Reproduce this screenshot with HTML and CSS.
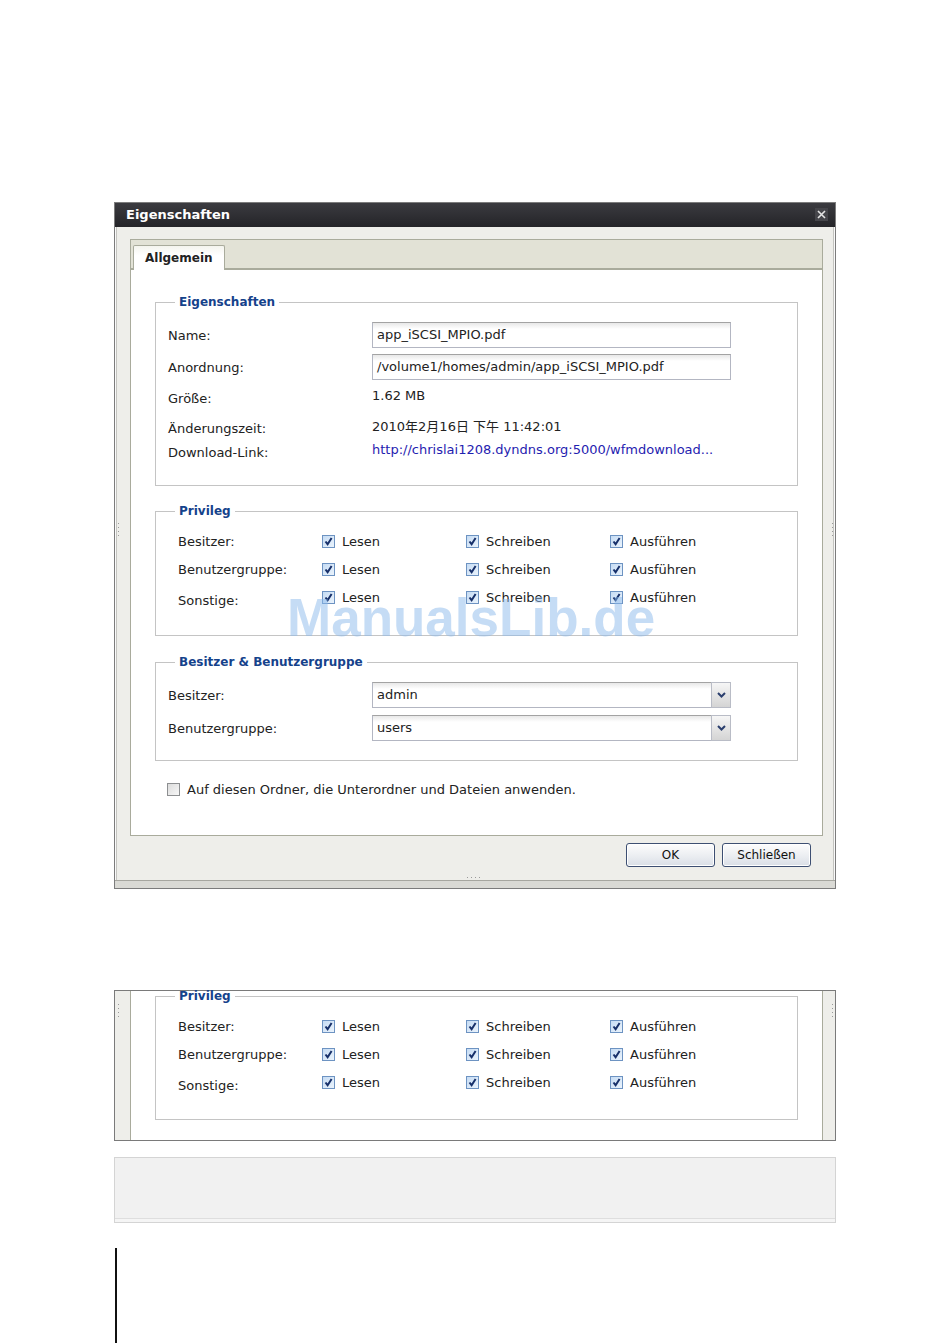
FILE: index.html
```html
<!DOCTYPE html>
<html lang="de">
  <head>
    <meta charset="UTF-8" />
    <meta name="viewport" content="width=device-width, initial-scale=1.0" />
    <title>Eigenschaften</title>
    <link rel="stylesheet" href="styles.css">
  </head>
  <body>
    <div class="page">
      <div class="window">
        <div class="win-head">
          <span class="win-title">Eigenschaften</span>
          <span class="win-close">
            <svg width="11" height="11" viewBox="0 0 11 11"><path d="M2 2 L9 9 M9 2 L2 9" stroke="#e4e4e4" stroke-width="1.6" fill="none"/></svg>
          </span>
        </div>
        <div class="win-body">
          <div class="tabpanel">
            <div class="tabstrip">
              <div class="tab">Allgemein</div>
            </div>
            <div class="tabbody">
              <fieldset class="group g-props">
                <legend>Eigenschaften</legend>
                <div class="props">
                  <div class="lbl">Name:</div>
                  <div class="field">app_iSCSI_MPIO.pdf</div>
                  <div class="lbl">Anordnung:</div>
                  <div class="field">/volume1/homes/admin/app_iSCSI_MPIO.pdf</div>
                  <div class="lbl">Größe:</div>
                  <div class="val">1.62 MB</div>
                  <div class="lbl">Änderungszeit:</div>
                  <div class="val">2010年2月16日 下午 11:42:01</div>
                  <div class="lbl">Download-Link:</div>
                  <div class="val"><a class="link" href="#">http://chrislai1208.dyndns.org:5000/wfmdownload...</a></div>
                </div>
              </fieldset>

              <fieldset class="group g-priv">
                <legend>Privileg</legend>
                <div class="priv">
                  <div class="plbl">Besitzer:</div>
                  <label class="chk"><span class="cb on"><svg width="11" height="11" viewBox="0 0 11 11"><path d="M2.5 5.5 L4.6 8.2 L8.6 2" stroke="#17306a" stroke-width="2" fill="none"/></svg></span>Lesen</label>
                  <label class="chk"><span class="cb on"><svg width="11" height="11" viewBox="0 0 11 11"><path d="M2.5 5.5 L4.6 8.2 L8.6 2" stroke="#17306a" stroke-width="2" fill="none"/></svg></span>Schreiben</label>
                  <label class="chk"><span class="cb on"><svg width="11" height="11" viewBox="0 0 11 11"><path d="M2.5 5.5 L4.6 8.2 L8.6 2" stroke="#17306a" stroke-width="2" fill="none"/></svg></span>Ausführen</label>

                  <div class="plbl">Benutzergruppe:</div>
                  <label class="chk"><span class="cb on"><svg width="11" height="11" viewBox="0 0 11 11"><path d="M2.5 5.5 L4.6 8.2 L8.6 2" stroke="#17306a" stroke-width="2" fill="none"/></svg></span>Lesen</label>
                  <label class="chk"><span class="cb on"><svg width="11" height="11" viewBox="0 0 11 11"><path d="M2.5 5.5 L4.6 8.2 L8.6 2" stroke="#17306a" stroke-width="2" fill="none"/></svg></span>Schreiben</label>
                  <label class="chk"><span class="cb on"><svg width="11" height="11" viewBox="0 0 11 11"><path d="M2.5 5.5 L4.6 8.2 L8.6 2" stroke="#17306a" stroke-width="2" fill="none"/></svg></span>Ausführen</label>

                  <div class="plbl low">Sonstige:</div>
                  <label class="chk"><span class="cb on"><svg width="11" height="11" viewBox="0 0 11 11"><path d="M2.5 5.5 L4.6 8.2 L8.6 2" stroke="#17306a" stroke-width="2" fill="none"/></svg></span>Lesen</label>
                  <label class="chk"><span class="cb on"><svg width="11" height="11" viewBox="0 0 11 11"><path d="M2.5 5.5 L4.6 8.2 L8.6 2" stroke="#17306a" stroke-width="2" fill="none"/></svg></span>Schreiben</label>
                  <label class="chk"><span class="cb on"><svg width="11" height="11" viewBox="0 0 11 11"><path d="M2.5 5.5 L4.6 8.2 L8.6 2" stroke="#17306a" stroke-width="2" fill="none"/></svg></span>Ausführen</label>
                </div>
              </fieldset>

              <fieldset class="group g-owner">
                <legend>Besitzer &amp; Benutzergruppe</legend>
                <div class="owner">
                  <div class="lbl">Besitzer:</div>
                  <div class="field combo">admin<span class="trigger"><svg width="9" height="6" viewBox="0 0 9 6"><path d="M1 1 L4.5 4.5 L8 1" stroke="#2b3f6e" stroke-width="2" fill="none"/></svg></span></div>
                  <div class="lbl">Benutzergruppe:</div>
                  <div class="field combo">users<span class="trigger"><svg width="9" height="6" viewBox="0 0 9 6"><path d="M1 1 L4.5 4.5 L8 1" stroke="#2b3f6e" stroke-width="2" fill="none"/></svg></span></div>
                </div>
              </fieldset>

              <label class="apply"><span class="cb"></span>Auf diesen Ordner, die Unterordner und Dateien anwenden.</label>
            </div>
          </div>
          <div class="buttons">
            <button class="btn">OK</button>
            <button class="btn">Schließen</button>
          </div>
        </div>
        <div class="win-foot"><span class="grip-b"></span></div>
        <span class="grip grip-l"></span>
        <span class="grip grip-r"></span>
      </div>

      <div class="frag">
        <div class="frag-panel">
          <fieldset class="group g-frag">
            <legend>Privileg</legend>
            <div class="priv">
              <div class="plbl">Besitzer:</div>
              <label class="chk"><span class="cb on"><svg width="11" height="11" viewBox="0 0 11 11"><path d="M2.5 5.5 L4.6 8.2 L8.6 2" stroke="#17306a" stroke-width="2" fill="none"/></svg></span>Lesen</label>
              <label class="chk"><span class="cb on"><svg width="11" height="11" viewBox="0 0 11 11"><path d="M2.5 5.5 L4.6 8.2 L8.6 2" stroke="#17306a" stroke-width="2" fill="none"/></svg></span>Schreiben</label>
              <label class="chk"><span class="cb on"><svg width="11" height="11" viewBox="0 0 11 11"><path d="M2.5 5.5 L4.6 8.2 L8.6 2" stroke="#17306a" stroke-width="2" fill="none"/></svg></span>Ausführen</label>

              <div class="plbl">Benutzergruppe:</div>
              <label class="chk"><span class="cb on"><svg width="11" height="11" viewBox="0 0 11 11"><path d="M2.5 5.5 L4.6 8.2 L8.6 2" stroke="#17306a" stroke-width="2" fill="none"/></svg></span>Lesen</label>
              <label class="chk"><span class="cb on"><svg width="11" height="11" viewBox="0 0 11 11"><path d="M2.5 5.5 L4.6 8.2 L8.6 2" stroke="#17306a" stroke-width="2" fill="none"/></svg></span>Schreiben</label>
              <label class="chk"><span class="cb on"><svg width="11" height="11" viewBox="0 0 11 11"><path d="M2.5 5.5 L4.6 8.2 L8.6 2" stroke="#17306a" stroke-width="2" fill="none"/></svg></span>Ausführen</label>

              <div class="plbl low">Sonstige:</div>
              <label class="chk"><span class="cb on"><svg width="11" height="11" viewBox="0 0 11 11"><path d="M2.5 5.5 L4.6 8.2 L8.6 2" stroke="#17306a" stroke-width="2" fill="none"/></svg></span>Lesen</label>
              <label class="chk"><span class="cb on"><svg width="11" height="11" viewBox="0 0 11 11"><path d="M2.5 5.5 L4.6 8.2 L8.6 2" stroke="#17306a" stroke-width="2" fill="none"/></svg></span>Schreiben</label>
              <label class="chk"><span class="cb on"><svg width="11" height="11" viewBox="0 0 11 11"><path d="M2.5 5.5 L4.6 8.2 L8.6 2" stroke="#17306a" stroke-width="2" fill="none"/></svg></span>Ausführen</label>
            </div>
          </fieldset>
        </div>
        <span class="grip grip-l"></span>
        <span class="grip grip-r"></span>
      </div>

      <div class="note"></div>
      <div class="bar"></div>

      <div class="watermark">ManualsLib.de</div>
    </div>
  </body>
</html>
```

FILE: styles.css
```css
body {
  margin: 0;
  background: #fff;
  font-family: "DejaVu Sans", "Noto Sans CJK SC", sans-serif;
  font-size: 13px;
  color: #222;
}
.page {
  position: relative;
  margin-left: 114px;
  padding-top: 202px;
  width: 722px;
}

/* window */
.window {
  position: relative;
  width: 722px;
  box-sizing: border-box;
  border: 1px solid #7c7c7c;
  background: #eeeeea;
  box-shadow: inset 0 0 0 1px #fafafa, inset 0 0 0 2px #c4c4c0;
}
.win-head {
  height: 24px;
  box-sizing: border-box;
  display: flex;
  align-items: center;
  justify-content: space-between;
  padding: 0 7px 2px 11px;
  background: linear-gradient(#3b3b40, #242428);
}
.win-title {
  color: #fff;
  font-weight: bold;
  font-size: 13px;
}
.win-close {
  width: 13px;
  height: 13px;
  display: flex;
  align-items: center;
  justify-content: center;
  background: #45454a;
}
.win-body {
  padding: 12px 12px 0 15px;
}
.tabstrip {
  height: 23px;
  padding: 5px 0 0 2px;
  box-sizing: content-box;
  border: 1px solid #a9ab9c;
  border-bottom-width: 2px;
  background: #e2e2d6;
  display: flex;
  align-items: flex-start;
}
.tab {
  width: 92px;
  height: 25px;
  margin-bottom: -2px;
  border: 1px solid #a9ab9c;
  border-bottom: none;
  border-radius: 2px 2px 0 0;
  background: linear-gradient(#f4f4ee, #fff 40%);
  font-weight: bold;
  font-size: 12px;
  line-height: 24px;
  padding-left: 11px;
  box-sizing: border-box;
  color: #222;
}
.tabbody {
  background: #fff;
  border: 1px solid #a9ab9c;
  border-top: none;
  padding: 24px 0 36px;
}

/* fieldsets */
.group {
  margin: 0 24px;
  padding: 9px 12px 23px;
  border: 1px solid #c4c4c4;
  min-width: 0;
}
.group legend {
  margin-left: 7px;
  padding: 0 4px;
  font-size: 12px;
  font-weight: bold;
  line-height: 16px;
  color: #15428b;
}
.g-priv {
  margin-top: 17px;
  padding: 8px 12px 24px;
}
.g-owner {
  margin-top: 18px;
  padding: 12px 12px 19px;
}
.props {
  display: grid;
  grid-template-columns: 204px 359px;
  grid-template-rows: 32px 32px 31px 28px 20px;
  align-items: center;
}
.owner {
  display: grid;
  grid-template-columns: 204px 359px;
  grid-auto-rows: 26px;
  row-gap: 7px;
  align-items: center;
}
.val {
  padding-bottom: 6px;
}
.link {
  color: #1f22b0;
  text-decoration: none;
}
.field {
  position: relative;
  height: 26px;
  box-sizing: border-box;
  border: 1px solid #b3b6c2;
  border-top-color: #a3a3a3;
  background: linear-gradient(#e8e8e8, #fff 6px);
  padding-left: 4px;
  line-height: 24px;
  color: #222;
}
.trigger {
  position: absolute;
  top: -1px;
  right: -1px;
  width: 20px;
  height: 26px;
  box-sizing: border-box;
  border: 1px solid #b9bcc6;
  background: linear-gradient(#f6f6f6, #d4d4d4);
  display: flex;
  align-items: center;
  justify-content: center;
}
.priv {
  margin-left: 10px;
  display: grid;
  grid-template-columns: repeat(4, 144px);
  grid-auto-rows: 28px;
  align-items: center;
}
.plbl.low {
  padding-top: 6px;
}
.chk {
  display: flex;
  align-items: center;
  gap: 7px;
}
.cb {
  width: 13px;
  height: 13px;
  box-sizing: border-box;
  border: 1px solid #8d8f91;
  background: linear-gradient(135deg, #dcdcdc, #f7f7f7);
  display: inline-flex;
  align-items: center;
  justify-content: center;
  flex: none;
}
.cb.on {
  border-color: #6d93c2;
  background: linear-gradient(135deg, #c6dcf4, #eaf3fc);
}
.apply {
  margin: 18px 0 0 36px;
  height: 20px;
  display: flex;
  align-items: center;
  gap: 7px;
}

/* buttons */
.buttons {
  display: flex;
  justify-content: flex-end;
  gap: 7px;
  margin: 7px 12px 13px 0;
}
.btn {
  width: 89px;
  height: 24px;
  border: 1px solid #3d4f72;
  border-radius: 3px;
  background: linear-gradient(#fdfdfd, #e9ecf0 60%, #d9dee6);
  box-shadow: inset 0 0 0 1px #fff;
  font-family: "DejaVu Sans", sans-serif;
  font-size: 12px;
  color: #111;
  padding: 0;
}
.win-foot {
  height: 7px;
  border-top: 1px solid #a7a7a0;
  background: #dadad5;
  display: flex;
  justify-content: center;
}
.grip-b {
  width: 16px;
  height: 1px;
  margin-top: -4px;
  background: repeating-linear-gradient(90deg, #9a9a9a 0 1px, transparent 1px 4px);
}
.grip {
  position: absolute;
  width: 1px;
  height: 16px;
  background: repeating-linear-gradient(#9a9a9a 0 1px, transparent 1px 4px);
}
.window .grip {
  top: 320px;
}
.grip-l {
  left: 3px;
}
.grip-r {
  right: 2px;
}

/* cropped second view */
.frag {
  position: relative;
  margin-top: 101px;
  height: 151px;
  box-sizing: border-box;
  border: 1px solid #7a7a7a;
  background: #eeeeea;
  padding: 0 12px 0 15px;
}
.frag-panel {
  display: flow-root;
  height: 100%;
  background: #fff;
  border-left: 1px solid #a9ab9c;
  border-right: 1px solid #a9ab9c;
}
.g-frag {
  margin-top: -1px;
  padding: 10px 12px 23px;
}
.g-frag legend {
  line-height: 12px;
}
.frag .grip {
  top: 13px;
}

.note {
  margin-top: 16px;
  height: 66px;
  box-sizing: border-box;
  border: 1px solid #d4d4d4;
  background: #f1f1f1;
  box-shadow: inset 0 -3px 0 #f5f5f5, inset 0 -4px 0 #dedede;
}
.bar {
  margin: 25px 0 0 1px;
  width: 2px;
  height: 95px;
  background: #111;
}

.watermark {
  position: absolute;
  left: 173px;
  top: 591px;
  font-family: "Liberation Sans", Arial, sans-serif;
  font-weight: bold;
  font-size: 53px;
  line-height: 53px;
  color: rgba(140, 186, 236, 0.5);
  pointer-events: none;
}
```
